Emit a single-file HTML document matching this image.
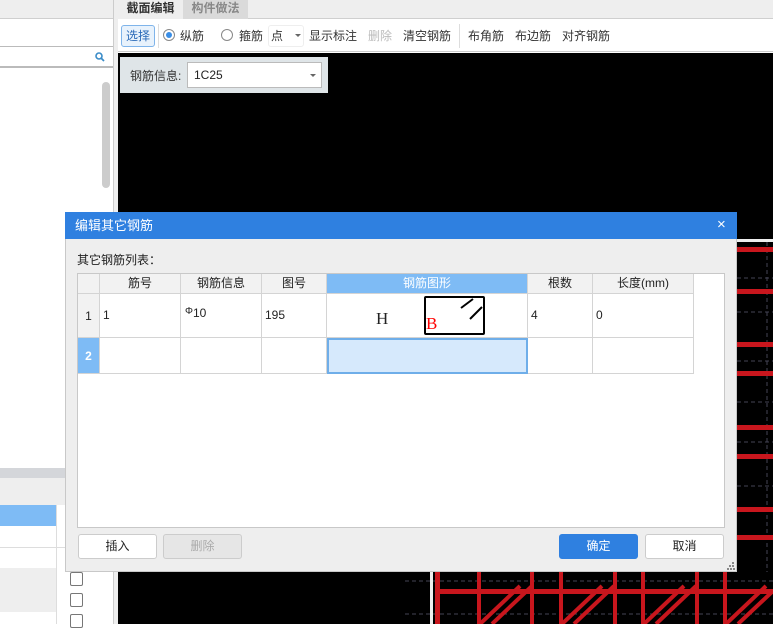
<!DOCTYPE html>
<html><head><meta charset="utf-8"><style>
*{margin:0;padding:0;box-sizing:border-box}
body{width:773px;height:624px;overflow:hidden;position:relative;background:#fff;font-family:"Liberation Sans","Noto Sans CJK SC",sans-serif;font-size:12px;color:#222}
.a{position:absolute}
.tb{position:absolute;top:27px;font-size:12px;color:#333}
.cell{position:absolute;border-right:1px solid #d4d4d4;border-bottom:1px solid #d4d4d4}
.btn{position:absolute;top:534px;height:25px;width:79px;border:1px solid #ccc;border-radius:3px;background:#fff;text-align:center;line-height:23px;font-size:12px}
</style></head><body>
<div class="a" style="left:0;top:0;width:773px;height:19px;background:#eeeeee;border-bottom:1px solid #cfcfcf"></div>
<div class="a" style="left:118px;top:0;width:65px;height:19px;background:#eeeeee;font-weight:bold;text-align:center;line-height:16px;color:#333">截面编辑</div>
<div class="a" style="left:183px;top:0;width:65px;height:19px;background:#dadada;font-weight:bold;text-align:center;line-height:16px;color:#888">构件做法</div>
<div class="a" style="left:0;top:19px;width:113px;height:605px;background:#fff"></div>
<div class="a" style="left:113px;top:0;width:5px;height:624px;background:#eeeeee;border-left:1px solid #ccc"></div>
<div class="a" style="left:0;top:46px;width:113px;height:1px;background:#bbb"></div>
<div class="a" style="left:0;top:66px;width:113px;height:2px;background:#bbb"></div>
<svg class="a" style="left:95px;top:52px" width="10" height="10"><circle cx="4" cy="4" r="3" fill="none" stroke="#3a8cc8" stroke-width="1.6"/><path d="M6 6l3 3" stroke="#3a8cc8" stroke-width="1.8"/></svg>
<div class="a" style="left:102px;top:82px;width:8px;height:106px;background:#ccc;border-radius:4px"></div>
<div class="a" style="left:0;top:468px;width:113px;height:10px;background:#d4d6da"></div>
<div class="a" style="left:0;top:478px;width:113px;height:27px;background:#eeeeee"></div>
<div class="a" style="left:0;top:505px;width:56px;height:21px;background:#7ebbf5"></div>
<div class="a" style="left:0;top:547px;width:113px;height:1px;background:#ddd"></div>
<div class="a" style="left:0;top:568px;width:56px;height:22px;background:#eee"></div>
<div class="a" style="left:0;top:590px;width:56px;height:22px;background:#eee"></div>
<div class="a" style="left:56px;top:505px;width:1px;height:119px;background:#ddd"></div>
<div class="a" style="left:70px;top:572px;width:13px;height:14px;border:1px solid #777;border-radius:2px"></div>
<div class="a" style="left:70px;top:593px;width:13px;height:14px;border:1px solid #777;border-radius:2px"></div>
<div class="a" style="left:70px;top:614px;width:13px;height:14px;border:1px solid #777;border-radius:2px"></div>
<div class="a" style="left:118px;top:19px;width:655px;height:33px;background:#fff;border-bottom:1px solid #ccc"></div>
<div class="a" style="left:121px;top:25px;width:34px;height:22px;border:1px solid #7fb4ea;background:#e8f2fc;border-radius:3px;color:#2a6ab8;text-align:center;line-height:20px">选择</div>
<div class="a" style="left:158px;top:24px;width:1px;height:24px;background:#ddd"></div>
<div class="a" style="left:163px;top:29px;width:12px;height:12px;border:1px solid #888;border-radius:50%"><div class="a" style="left:2px;top:2px;width:6px;height:6px;background:#3a8ee6;border-radius:50%"></div></div>
<div class="tb" style="left:180px">纵筋</div>
<div class="a" style="left:221px;top:29px;width:12px;height:12px;border:1px solid #888;border-radius:50%"></div>
<div class="tb" style="left:239px">箍筋</div>
<div class="a" style="left:268px;top:25px;width:36px;height:22px;border:1px solid #eee;border-radius:3px"></div>
<div class="tb" style="left:271px">点</div>
<div class="a" style="left:295px;top:34px;border:3px solid transparent;border-top:3px solid #666"></div>
<div class="tb" style="left:309px">显示标注</div>
<div class="tb" style="left:368px;color:#bbb">删除</div>
<div class="tb" style="left:403px">清空钢筋</div>
<div class="a" style="left:459px;top:24px;width:1px;height:24px;background:#ddd"></div>
<div class="tb" style="left:468px">布角筋</div>
<div class="tb" style="left:515px">布边筋</div>
<div class="tb" style="left:562px">对齐钢筋</div>
<div class="a" style="left:118px;top:53px;width:655px;height:571px;background:#000"></div>
<div class="a" style="left:120px;top:57px;width:208px;height:36px;background:#dfe5e8"></div>
<div class="a" style="left:130px;top:67px;color:#333">钢筋信息:</div>
<div class="a" style="left:187px;top:62px;width:135px;height:26px;background:#fff;border:1px solid #bbb;padding-left:6px;line-height:24px">1C25</div>
<div class="a" style="left:310px;top:74px;border:3px solid transparent;border-top:3px solid #666"></div>
<div class="a" style="left:737px;top:239px;width:36px;height:3px;background:#eee"></div>
<svg class="a" style="left:737px;top:242px" width="36" height="330">
<g stroke="#445" stroke-dasharray="4 3"><path d="M0 36H36M0 70H36M0 119H36M0 160H36M0 200H36M0 244H36"/><path d="M30 0V330"/></g>
<g fill="#c8161d"><rect x="0" y="5" width="36" height="5"/><rect x="0" y="47" width="36" height="5"/><rect x="0" y="100" width="36" height="5"/><rect x="0" y="129" width="36" height="5"/><rect x="0" y="183" width="36" height="5"/><rect x="0" y="212" width="36" height="5"/><rect x="0" y="265" width="36" height="5"/><rect x="0" y="293" width="36" height="5"/></g>
</svg>
<svg class="a" style="left:405px;top:571px" width="368" height="53">
<g stroke="#445" stroke-dasharray="4 3"><path d="M0 10H368M0 43H368"/></g>
<rect x="25" y="0" width="3" height="53" fill="#eee"/>
<g fill="#c8161d"><rect x="30" y="0" width="5" height="53"/><rect x="72" y="0" width="4" height="53"/><rect x="125" y="0" width="4" height="53"/><rect x="154" y="0" width="4" height="53"/><rect x="208" y="0" width="4" height="53"/><rect x="236" y="0" width="4" height="53"/><rect x="290" y="0" width="4" height="53"/><rect x="318" y="0" width="4" height="53"/><rect x="30" y="18" width="338" height="5"/></g>
<g stroke="#c8161d" stroke-width="4"><path d="M75 53L115 15M87 53L127 15M157 53L197 15M169 53L209 15M239 53L279 15M251 53L291 15M321 53L361 15M333 53L368 20"/></g>
</svg>
<div class="a" style="left:65px;top:212px;width:672px;height:360px;background:#eeeeee;border:1px solid #c8c8c8"></div>
<div class="a" style="left:65px;top:212px;width:672px;height:27px;background:#2f80e0;color:#fff;padding-left:10px;line-height:27px;font-size:13px">编辑其它钢筋</div>
<div class="a" style="left:717px;top:216px;color:#fff;font-size:15px">×</div>
<div class="a" style="left:77px;top:251px;color:#222">其它钢筋列表：</div>
<div class="a" style="left:77px;top:273px;width:648px;height:255px;background:#fff;border:1px solid #c8c8c8"></div>
<div class="cell" style="left:78px;top:274px;width:22px;height:20px;background:#f2f2f2"></div>
<div class="cell" style="left:100px;top:274px;width:81px;height:20px;background:#f2f2f2;text-align:center;line-height:19px">筋号</div>
<div class="cell" style="left:181px;top:274px;width:81px;height:20px;background:#f2f2f2;text-align:center;line-height:19px">钢筋信息</div>
<div class="cell" style="left:262px;top:274px;width:65px;height:20px;background:#f2f2f2;text-align:center;line-height:19px">图号</div>
<div class="cell" style="left:327px;top:274px;width:201px;height:20px;background:#7ebbf5;color:#fff;text-align:center;line-height:19px">钢筋图形</div>
<div class="cell" style="left:528px;top:274px;width:65px;height:20px;background:#f2f2f2;text-align:center;line-height:19px">根数</div>
<div class="cell" style="left:593px;top:274px;width:101px;height:20px;background:#f2f2f2;text-align:center;line-height:19px">长度(mm)</div>
<div class="cell" style="left:78px;top:294px;width:22px;height:44px;background:#f2f2f2;text-align:center;line-height:44px">1</div>
<div class="cell" style="left:100px;top:294px;width:81px;height:44px;padding:14px 3px">1</div>
<div class="cell" style="left:181px;top:294px;width:81px;height:44px;padding:12px 4px"><span style="font-size:10px;vertical-align:top">Φ</span>10</div>
<div class="cell" style="left:262px;top:294px;width:65px;height:44px;padding:14px 3px">195</div>
<div class="cell" style="left:327px;top:294px;width:201px;height:44px">
<span class="a" style="left:49px;top:15px;font-family:'Liberation Serif',serif;font-size:17px">H</span>
<div class="a" style="left:97px;top:2px;width:61px;height:39px;border:2px solid #000;border-radius:2px"></div>
<span class="a" style="left:99px;top:20px;font-family:'Liberation Serif',serif;font-size:17px;color:#f00">B</span>
<svg class="a" style="left:130px;top:4px" width="28" height="30"><path d="M4 10L16 1M13 21L25 9" stroke="#000" stroke-width="2"/></svg>
</div>
<div class="cell" style="left:528px;top:294px;width:65px;height:44px;padding:14px 3px">4</div>
<div class="cell" style="left:593px;top:294px;width:101px;height:44px;padding:14px 3px">0</div>
<div class="cell" style="left:78px;top:338px;width:22px;height:36px;background:#7ebbf5;color:#fff;font-weight:bold;text-align:center;line-height:36px">2</div>
<div class="cell" style="left:100px;top:338px;width:81px;height:36px"></div>
<div class="cell" style="left:181px;top:338px;width:81px;height:36px"></div>
<div class="cell" style="left:262px;top:338px;width:65px;height:36px"></div>
<div class="a" style="left:327px;top:338px;width:201px;height:36px;background:#d6e9fc;border:2px solid #6faee9"></div>
<div class="cell" style="left:528px;top:338px;width:65px;height:36px"></div>
<div class="cell" style="left:593px;top:338px;width:101px;height:36px"></div>
<div class="btn" style="left:78px">插入</div>
<div class="btn" style="left:163px;background:#e6e6e6;color:#aaa">删除</div>
<div class="btn" style="left:559px;background:#2f80e0;border-color:#2f80e0;color:#fff">确定</div>
<div class="btn" style="left:645px">取消</div>
<svg class="a" style="left:727px;top:562px" width="8" height="8" fill="#888"><rect x="5" y="0" width="2" height="2"/><rect x="2" y="3" width="2" height="2"/><rect x="5" y="3" width="2" height="2"/><rect x="0" y="6" width="2" height="2"/><rect x="3" y="6" width="2" height="2"/><rect x="6" y="6" width="2" height="2"/></svg>
</body></html>
